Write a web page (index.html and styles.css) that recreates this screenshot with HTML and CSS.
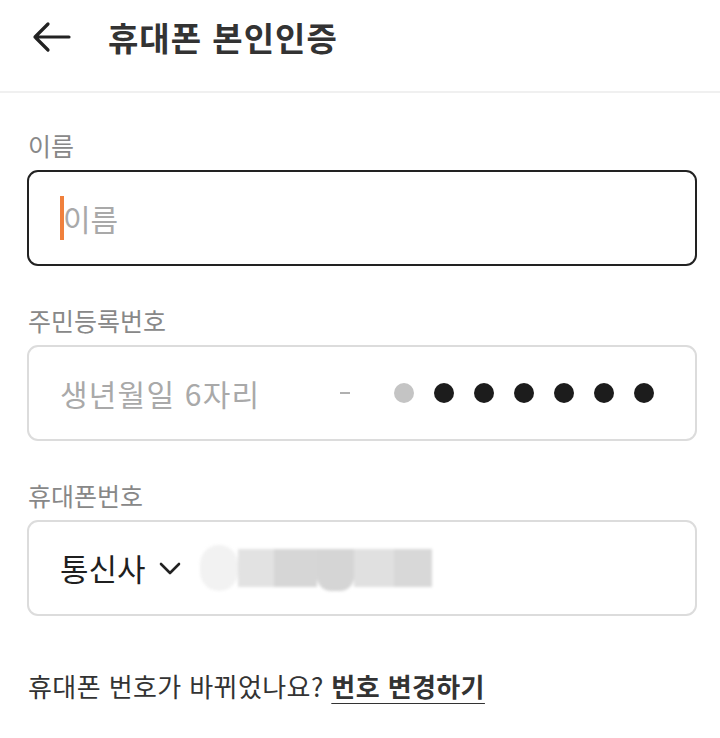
FILE: index.html
```html
<!DOCTYPE html>
<html lang="ko">
<head>
<meta charset="utf-8">
<link rel="stylesheet" href="styles.css">
</head>
<body>
<header class="header">
  <svg class="back" width="40" height="32" viewBox="0 0 40 32"><path d="M37 16H3M16 3L3 16l13 13" fill="none" stroke="#222" stroke-width="3.2" stroke-linecap="round" stroke-linejoin="round"/></svg>
  <h1 class="title">휴대폰 본인인증</h1>
</header>
<main class="form">
  <div class="field">
    <div class="label">이름</div>
    <div class="box box-active">
      <span class="caret"></span><span class="placeholder">이름</span>
    </div>
  </div>
  <div class="field">
    <div class="label">주민등록번호</div>
    <div class="box">
      <span class="placeholder ph-birth">생년월일 6자리</span>
      <span class="dash"></span>
      <div class="dots">
        <span class="dot dot-gray"></span>
        <span class="dot"></span><span class="dot"></span><span class="dot"></span>
        <span class="dot"></span><span class="dot"></span><span class="dot"></span>
      </div>
    </div>
  </div>
  <div class="field">
    <div class="label">휴대폰번호</div>
    <div class="box">
      <span class="carrier">통신사</span>
      <svg class="chev" width="22" height="14" viewBox="0 0 22 14"><path d="M2 2l9 9 9-9" fill="none" stroke="#222" stroke-width="2.6" stroke-linecap="round" stroke-linejoin="round"/></svg>
      <div class="blur">
        <span class="b b1"></span><span class="b b2"></span><span class="b b3"></span><span class="b b4"></span><span class="b b5"></span><span class="b b6"></span>
      </div>
    </div>
  </div>
  <p class="change">휴대폰 번호가 바뀌었나요? <a class="link">번호 변경하기</a></p>
</main>
</body>
</html>
```
FILE: styles.css
```css
* { box-sizing: border-box; }
html, body { margin: 0; padding: 0; background: #fff; }
body { font-family: "Noto Sans CJK KR", "Noto Sans", sans-serif; color: #222; width: 720px; }
.header { height: 93px; border-bottom: 2px solid #f0f0f0; display: flex; align-items: center; padding: 0 0 17px 32px; }
.back { flex: none; }
.title { margin: 0 0 0 36px; font-size: 33px; line-height: 44px; font-weight: 700; color: #333; letter-spacing: 1px; }
.form { padding: 35px 24px 0 27px; }
.field { margin-bottom: 37px; }
.label { font-size: 25px; color: #888; line-height: 34px; margin-bottom: 8px; padding-left: 1px; }
.box { height: 96px; border: 2px solid #dcdcdc; border-radius: 11px; display: flex; align-items: center; padding-left: 31px; width: 670px; }
.box-active { border-color: #222; }
.caret { flex: none; width: 4px; height: 44px; background: #f0803c; margin-right: -1px; }
.placeholder { font-size: 30px; color: #a9a9a9; line-height: 40px; }
.ph-birth { width: 280px; letter-spacing: 1.2px; }
.dash { width: 10px; height: 2px; background: #b0b0b0; }
.dots { display: flex; gap: 20px; margin-left: 44px; }
.dot { width: 20px; height: 20px; border-radius: 50%; background: #1c1c1c; }
.dot-gray { background: #c4c4c4; }
.carrier { font-size: 31px; line-height: 40px; color: #1f1f1f; }
.chev { flex: none; margin-left: 13px; margin-top: 2px; }
.blur { display: flex; height: 46px; margin-left: 19px; align-items: center; filter: blur(1.5px); }
.b { height: 38px; display: block; }
.b1 { width: 38px; height: 46px; border-radius: 23px; background: #f2f2f2; }
.b2 { width: 36px; background: #e2e2e2; }
.b3 { width: 43px; background: #d6d6d6; }
.b4 { width: 37px; height: 42px; margin-top: 4px; background: #d5d5d5; border-radius: 0 0 14px 14px; }
.b5 { width: 40px; background: #e0e0e0; }
.b6 { width: 38px; background: #d8d8d8; }
.change { margin: 52px 0 0 1px; font-size: 26px; line-height: 36px; color: #333; letter-spacing: 0.4px; }
.link { font-weight: 700; color: #333; text-decoration: underline; text-underline-offset: 6px; text-decoration-thickness: 2px; }
```
